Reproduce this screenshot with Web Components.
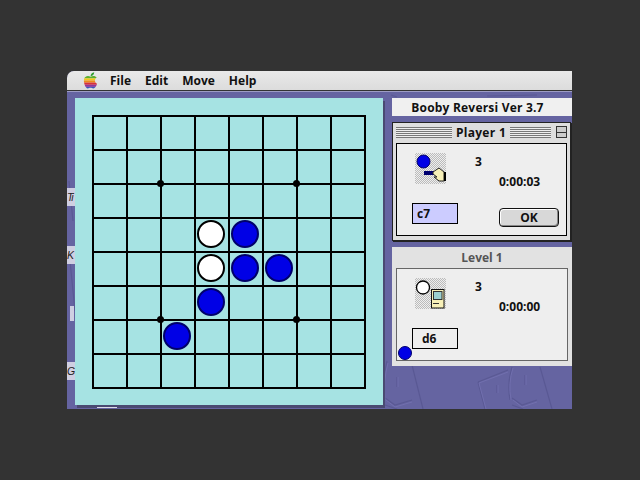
<!DOCTYPE html>
<html><head><meta charset="utf-8">
<style>
html,body{margin:0;height:100%;background:#333}
body{box-sizing:border-box;padding:71px 0 0 67px;font:bold 12px "Open Sans",sans-serif;color:#111}
</style></head>
<body>
<mac-desktop>
  <mac-menubar slot="menu"><span>File</span><span>Edit</span><span>Move</span><span>Help</span></mac-menubar>
  <reversi-board slot="board" stones="3,3,w 4,3,b 3,4,w 4,4,b 5,4,b 3,5,b 2,6,b"></reversi-board>
  <title-strip slot="side">Booby Reversi Ver 3.7</title-strip>
  <player-panel slot="side" title-text="Player 1" active score="3" time="0:00:03" move="c7" kind="hand"></player-panel>
  <player-panel slot="side" title-text="Level 1" score="3" time="0:00:00" move="d6" kind="mac"></player-panel>
</mac-desktop>
<script>
function def(name, css, html, init){
  customElements.define(name, class extends HTMLElement{
    connectedCallback(){
      if(this.shadowRoot) return;
      const r=this.attachShadow({mode:'open'});
      r.innerHTML='<style>'+css+'</style>'+(typeof html==='function'?html(this):html);
      if(init) init(r,this);
    }
  });
}
const FONT='bold 12px "Open Sans",sans-serif';
const wallpaper=`<svg class="wp" width="505" height="338" viewBox="0 0 505 338" fill="none">
<g stroke="#5a5994" stroke-width="1.2">
<path d="M345 294 L356 338 M473 296 L485 338"/>
<path d="M411 311 L441 299 M411 311 L418 338"/>
<path d="M445 296 Q440 312 443 329"/>
<path d="M320 290 Q315 310 317 330"/>
<path d="M318 327 L328 334 L345 329"/>
<path d="M445 327 L455 334 L470 329"/>
<path d="M318 334 L330 338 M445 334 L456 338"/>
<path d="M330 306 V316 M430 314 V322 M458 304 V314"/>
<path d="M2 110 L6 150 M3 190 L8 240 M324 24 L330 26 M420 25 L470 24"/>
</g>
<g stroke="#716fae" stroke-width="1">
<path d="M412 312 L441 301 M412 312 L419 338"/>
<path d="M446 297 Q441 312 444 329"/>
<path d="M321 292 Q316 310 318 329"/>
<path d="M319 329 L328 336 L345 331"/>
<path d="M446 329 L455 336 L470 331"/>
<path d="M331 306 V316 M431 314 V322 M459 304 V314"/>
</g></svg>`;
def('mac-desktop',`
:host{display:block;position:relative;width:505px;height:338px;background:#6564a1;overflow:hidden;border-top-left-radius:7px}
.wp{position:absolute;left:0;top:0}
.main{position:relative;display:flex;gap:9px;padding:7px 0 0 8px}
.side{display:flex;flex-direction:column;width:180px}
.tag{position:absolute;left:0;width:8px;height:18px;background:#cfcfe2;color:#222;font:italic 10.5px/18px "Liberation Sans",sans-serif;letter-spacing:-2px;white-space:nowrap}
.bar{position:absolute;left:3px;top:235px;width:4px;height:15px;background:#cfcfe2}
.foot{position:absolute;left:30px;top:336px;width:20px;height:1px;background:#dcdce8}
`,wallpaper+`
<slot name="menu"></slot>
<div class="main"><slot name="board"></slot><div class="side"><slot name="side"></slot></div></div>
<span class="tag" style="top:117px">Ti</span><span class="tag" style="top:175px">K</span><span class="bar"></span><span class="tag" style="top:291px">G</span><span class="foot"></span>`);
def('mac-menubar',`
:host{display:flex;align-items:center;position:relative;height:19px;background:linear-gradient(#e9e9e9,#dcdcdc);border-bottom:1px solid #333;box-shadow:0 1px 0 #9d9cc4;font:${FONT};color:#111;padding-left:16px}
::slotted(span){margin-right:14px}
svg{margin-right:12px;flex:none}
`,`<svg width="15" height="17" viewBox="0 0 14 16"><defs><clipPath id="a"><path d="M7 4.5C5 3.2 1.2 3.6.8 7.5c-.3 3 1.7 8 3.6 8 1 0 1.6-.6 2.6-.6s1.600.6 2.600.6c1.500 0 3-2.500 3.600-4.500-2.500-1-2.800-4.500-.3-5.800C11.600 3.400 9 3.300 7 4.500Z"/></clipPath></defs>
<path d="M7 4C7.200 2 8.500.6 10.500.3 10.500 2.300 9 3.800 7 4Z" fill="#2f9e2f"/>
<g clip-path="url(#a)"><rect y="3" width="14" height="3" fill="#5cb030"/><rect y="6" width="14" height="2" fill="#f2c71c"/><rect y="8" width="14" height="2" fill="#ee8a1e"/><rect y="10" width="14" height="2" fill="#d8303a"/><rect y="12" width="14" height="2" fill="#93359a"/><rect y="14" width="14" height="2" fill="#3a56b8"/></g></svg><slot></slot>`);
def('reversi-board',`
:host{display:block;box-sizing:border-box;width:308px;height:307px;padding:17px;background-color:#a6e3e3;background-image:radial-gradient(#9bdcdc 0.6px,transparent 0.7px);background-size:2px 2px;box-shadow:2px 3px 0 #4a4a72}
.g{position:relative;display:grid;grid-template-columns:repeat(8,34px);grid-template-rows:repeat(8,34px);width:274px;height:274px;
background-image:linear-gradient(#000 2px,transparent 2px),linear-gradient(90deg,#000 2px,transparent 2px);background-size:34px 34px}
.c{display:flex;align-items:center;justify-content:center}
.s{box-sizing:border-box;width:28px;height:28px;border-radius:50%}
.b{background:#0000e6;border:2px solid #00006a}
.w{background:#fff;border:2px solid #000}
.d{position:absolute;width:7px;height:7px;border-radius:50%;background:#000;transform:translate(-3px,-3px)}
`,'<div class="g"></div>',(r,h)=>{
  const g=r.querySelector('.g'),m={};
  (h.getAttribute('stones')||'').split(' ').forEach(t=>{const[x,y,c]=t.split(',');m[x+','+y]=c});
  for(let y=0;y<8;y++)for(let x=0;x<8;x++){
    const c=document.createElement('div');c.className='c';
    if(m[x+','+y]){const s=document.createElement('div');s.className='s '+m[x+','+y];c.append(s)}
    g.append(c);
  }
  [[2,2],[6,2],[2,6],[6,6]].forEach(([x,y])=>{const d=document.createElement('div');d.className='d';d.style.left=(x*34)+'px';d.style.top=(y*34)+'px';g.append(d)});
});
def('title-strip',`
:host{display:block;box-sizing:border-box;height:18px;padding:1px 9px 0 0;background:#f0f0f0;text-align:center;font:${FONT};letter-spacing:.2px;line-height:18px;color:#111;margin-bottom:6px}
`,'<slot></slot>');
const handIcon=`<svg width="31" height="31" viewBox="0 0 31 31" style="display:block"><circle cx="8.500" cy="8.500" r="6.500" fill="#0000e6" stroke="#00006a"/>
<path d="M9 18h10v4H9z" fill="#000070"/><path d="M18 19l6-4 5 4v9h-5l-5-4h3l-4-3z" fill="#f7f0b8" stroke="#222" stroke-width="1"/><rect x="29" y="19" width="2" height="9" fill="#000"/></svg>`;
const macIcon=`<svg width="31" height="31" viewBox="0 0 31 31" style="display:block"><circle cx="8" cy="9.500" r="6.500" fill="#fff" stroke="#000" stroke-width="1.300"/>
<rect x="16.500" y="11.500" width="12.500" height="18.500" fill="#f7f0b8" stroke="#111"/><rect x="18.500" y="13.500" width="8.500" height="8" fill="#9cd0d0" stroke="#333"/><rect x="18" y="25" width="6" height="1" fill="#333"/></svg>`;
def('player-panel',`
:host{display:block;position:relative;box-sizing:border-box;width:180px;height:119px;background:#e2e2e2;padding:0 4px 4px;margin-bottom:6px;font:${FONT};color:#111}
:host([active]){width:179px;background:#dedede;border:1px solid #222;padding:0 3px 3px;box-shadow:1px 1px 0 #222}
.t{display:flex;align-items:center;height:21px;color:#555;justify-content:center}
:host([active]) .t{color:#111;height:20px;padding-bottom:2px;box-sizing:border-box;letter-spacing:.3px}
.st{flex:none;height:11px;background:repeating-linear-gradient(#777 0 1px,#eee 1px 2px)}
.st.l{width:56px}.st.r{width:41px}
.lb{flex:1;text-align:center}
.z{flex:none;width:11px;height:12px;margin-left:5px;border:1px solid #333;box-sizing:border-box;background:linear-gradient(#333,#333) center/100% 1px no-repeat,#ccc}
.box{box-sizing:border-box;height:93px;border:1px solid #666;background:#eeeeee;display:grid;grid-template-columns:15px 46px 17px 24px 60px;grid-template-rows:9px 17px 4px 16px 13px 24px}
:host([active]) .box{border-color:#000}
.ic{grid-column:2/3;grid-row:2/5;margin-left:3px;width:31px;height:31px;background-color:#eee;background-image:conic-gradient(#bbb 25%,#eee 0 50%,#bbb 0 75%,#eee 0);background-size:2px 2px}
.sc{grid-column:4;grid-row:2;line-height:17px}
.tm{grid-column:5;grid-row:4;line-height:16px;white-space:nowrap}
.mv{grid-column:2;grid-row:6;box-sizing:border-box;width:46px;height:21px;border:1px solid #000;line-height:19px;padding-left:9px}
:host([active]) .mv{background:#ccccff;padding-left:4px}
.ok{grid-column:5;grid-row:6;margin-top:5px;box-sizing:border-box;width:60px;height:19px;border:1px solid #111;border-radius:4px;background:#d8d8d8;box-shadow:inset 1px 1px 0 #fff,inset -1px -1px 0 #888;text-align:center;line-height:17px;font:inherit;color:inherit;padding:0}
.dot{position:absolute;left:6px;top:99px;box-sizing:border-box;width:14px;height:14px;border-radius:50%;background:#0000e6;border:1px solid #00006a}
`,h=>{
  const a=h.hasAttribute('active'),t=h.getAttribute('title-text');
  return `<div class="t">${a?'<i class="st l"></i>':''}<span class="lb">${t}</span>${a?'<i class="st r"></i><i class="z"></i>':''}</div>
  <div class="box"><div class="ic">${h.getAttribute('kind')==='hand'?handIcon:macIcon}</div>
  <div class="sc">${h.getAttribute('score')}</div><div class="tm">${h.getAttribute('time')}</div>
  <div class="mv">${h.getAttribute('move')}</div>${a?'<button class="ok">OK</button>':''}</div>${a?'':'<span class="dot"></span>'}`;
});
</script>
</body></html>
